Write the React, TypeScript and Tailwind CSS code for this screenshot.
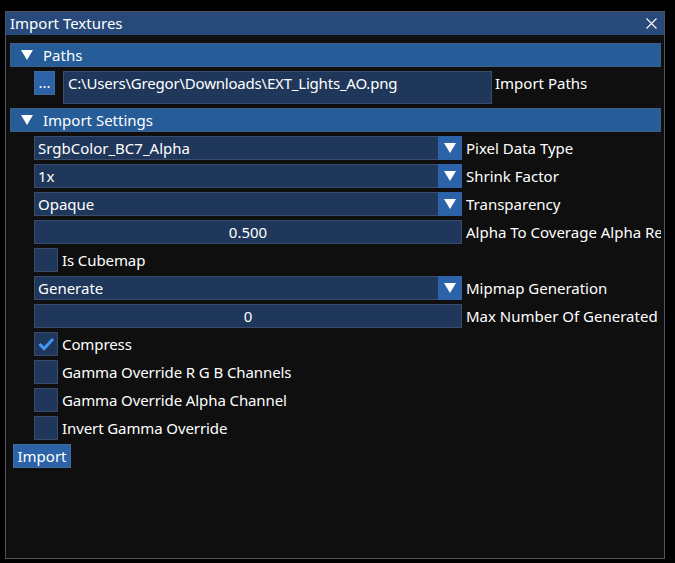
import React from "react";

const FONT = "font-['Noto_Sans','Open_Sans',sans-serif]";

function DownTri({ className = "" }: { className?: string }) {
  return (
    <svg width="12" height="10" viewBox="0 0 12 10" className={className}>
      <polygon points="0,0 12,0 6,10" fill="#ffffff" />
    </svg>
  );
}

function Header({ title }: { title: string }) {
  return (
    <div className="h-[24px] w-[651px] shrink-0 bg-[#265c97] border border-[#3e5f8a] flex items-center">
      <DownTri className="ml-[10px]" />
      <span className="ml-[10px] leading-none">{title}</span>
    </div>
  );
}

function Combo({ value, label }: { value: string; label: string }) {
  return (
    <div className="flex items-center h-[24px] shrink-0 overflow-hidden">
      <div className="w-[428px] shrink-0 h-[24px] bg-[#1f375a] border border-[#3a4c6a] flex items-center">
        <span className="pl-[3px] flex-1 leading-none whitespace-nowrap">{value}</span>
        <div className="w-[24px] h-[24px] -mr-px bg-[#2c63a8] flex items-center justify-center">
          <DownTri />
        </div>
      </div>
      <span className="ml-[4px] whitespace-nowrap leading-none">{label}</span>
    </div>
  );
}

function Drag({ value, label }: { value: string; label: string }) {
  return (
    <div className="flex items-center h-[24px] shrink-0 overflow-hidden">
      <div className="w-[428px] shrink-0 h-[24px] bg-[#1f375a] border border-[#3a4c6a] flex items-center justify-center">
        <span className="leading-none">{value}</span>
      </div>
      <span className="ml-[4px] whitespace-nowrap leading-none">{label}</span>
    </div>
  );
}

function Check({ label, checked = false }: { label: string; checked?: boolean }) {
  return (
    <div className="flex items-center h-[24px] shrink-0 overflow-hidden">
      <div className="w-[24px] shrink-0 h-[24px] bg-[#1f375a] border border-[#3a4c6a] flex items-center justify-center">
        {checked && (
          <svg width="18" height="16" viewBox="0 0 18 16">
            <polyline
              points="2.5,8 7,12.5 16,3"
              fill="none"
              stroke="#4296fa"
              strokeWidth="3"
              strokeLinejoin="miter"
              strokeLinecap="butt"
            />
          </svg>
        )}
      </div>
      <span className="ml-[4px] whitespace-nowrap leading-none tracking-[-0.1px]">{label}</span>
    </div>
  );
}

export default function App() {
  return (
    <div className={`w-[675px] h-[563px] bg-black pt-[11px] pl-[5px] ${FONT} text-[15px] text-white overflow-hidden`}>
      <div className="w-[660px] h-[548px] border border-[#52525f] bg-[#0f0f0f] flex flex-col">
        {/* title bar */}
        <div className="h-[23px] shrink-0 bg-[#284a7b] flex items-center justify-between">
          <span className="pl-[4px] leading-none">Import Textures</span>
          <svg width="11" height="11" viewBox="0 0 11 11" className="mr-[7px]">
            <path d="M0.5 0.5 L10.5 10.5 M10.5 0.5 L0.5 10.5" stroke="#ffffff" strokeWidth="1.1" />
          </svg>
        </div>
        {/* content */}
        <div className="flex flex-col gap-[4px] pt-[8px] pl-[4px] overflow-hidden">
          <Header title="Paths" />
          <div className="flex items-start pl-[24px] shrink-0">
            <div className="w-[21px] shrink-0 h-[24px] bg-[#2c63a8] border border-[#3f6aa0] flex items-center justify-center">
              <span className="leading-none -mt-[2px]">...</span>
            </div>
            <div className="ml-[8px] shrink-0 w-[429px] h-[33px] bg-[#1f375a] border border-[#3a4c6a] flex items-start">
              <span className="pl-[4px] pt-[4px] leading-none whitespace-nowrap tracking-[-0.2px]">
                C:\Users\Gregor\Downloads\EXT_Lights_AO.png
              </span>
            </div>
            <span className="ml-[3px] mt-[5px] whitespace-nowrap leading-none">Import Paths</span>
          </div>
          <Header title="Import Settings" />
          <div className="flex flex-col gap-[4px] pl-[24px] overflow-hidden w-[651px] shrink-0">
            <Combo value="SrgbColor_BC7_Alpha" label="Pixel Data Type" />
            <Combo value="1x" label="Shrink Factor" />
            <Combo value="Opaque" label="Transparency" />
            <Drag value="0.500" label="Alpha To Coverage Alpha Reference" />
            <Check label="Is Cubemap" />
            <Combo value="Generate" label="Mipmap Generation" />
            <Drag value="0" label="Max Number Of Generated Mips" />
            <Check label="Compress" checked />
            <Check label="Gamma Override R G B Channels" />
            <Check label="Gamma Override Alpha Channel" />
            <Check label="Invert Gamma Override" />
          </div>
          <div className="pl-[3px] shrink-0">
            <div className="w-[58px] h-[24px] bg-[#2c63a8] border border-[#3f6aa0] flex items-center justify-center">
              <span className="leading-none">Import</span>
            </div>
          </div>
        </div>
      </div>
    </div>
  );
}
